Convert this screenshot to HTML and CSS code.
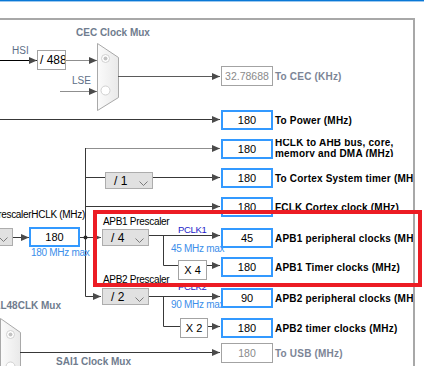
FILE: index.html
```html
<!DOCTYPE html>
<html lang="en">
<head>
  <meta charset="UTF-8">
  <meta name="viewport" content="width=device-width, initial-scale=1.0">
  <title>Clock Configuration</title>
  <link rel="stylesheet" href="styles.css">
</head>
<body>
  <div class="page">
    <div class="accent"></div>

    <div class="canvas">
      <svg class="wires" width="413" height="366" viewBox="0 0 413 366">
        <defs>
          <marker id="arr" markerWidth="8" markerHeight="7" refX="8" refY="3.5" orient="auto" markerUnits="userSpaceOnUse">
            <path class="head" d="M0,0 L8,3.5 L0,7 z"/>
          </marker>
          <linearGradient id="muxfill" x1="0" x2="1" y1="0" y2="0">
            <stop offset="0" stop-color="#fbfbfb"/>
            <stop offset="1" stop-color="#e9e9e9"/>
          </linearGradient>
        </defs>

        <!-- CEC mux -->
        <path class="wire dark" d="M0 60.5 H37" marker-end="url(#arr)"/>
        <path class="wire soft" d="M66 60.5 H97" marker-end="url(#arr)"/>
        <path class="wire soft" d="M60 91.5 H97" marker-end="url(#arr)"/>
        <polygon class="mux" points="97.5,43.5 118.5,57.5 118.5,97.5 97.5,110.5"/>
        <circle class="radio" cx="105.5" cy="58.5" r="4"/>
        <circle class="dot" cx="105.5" cy="58.5" r="2"/>
        <circle class="radio" cx="105.5" cy="90.5" r="4.5"/>
        <path class="wire mid" d="M118 76.5 H220" marker-end="url(#arr)"/>

        <!-- HCLK outputs -->
        <path class="wire" d="M0 119.5 H220" marker-end="url(#arr)"/>
        <path class="wire soft" d="M85.5 148.5 H220" marker-end="url(#arr)"/>
        <path class="wire" d="M85.5 148 V296.5 H101" marker-end="url(#arr)"/>
        <path class="wire" d="M85.5 177.5 H105"/>
        <path class="wire" d="M153 177.5 H220" marker-end="url(#arr)"/>
        <path class="wire" d="M85.5 206.5 H220" marker-end="url(#arr)"/>
        <path class="wire" d="M13 237.5 H29" marker-end="url(#arr)"/>
        <path class="wire" d="M79 237.5 H101" marker-end="url(#arr)"/>
        <circle class="joint" cx="85.5" cy="237.5" r="2"/>

        <!-- APB1 -->
        <path class="wire" d="M149 235.5 H220" marker-end="url(#arr)"/>
        <path class="wire" d="M163.5 235.5 V265.5 H178"/>
        <path class="wire" d="M207 265.5 H220" marker-end="url(#arr)"/>

        <!-- APB2 -->
        <path class="wire" d="M149 296.5 H220" marker-end="url(#arr)"/>
        <path class="wire" d="M163.5 296.5 V326.5 H180"/>
        <path class="wire" d="M208 326.5 H220" marker-end="url(#arr)"/>

        <!-- 48 MHz mux -->
        <polygon class="mux" points="0.5,318.5 20.5,332.5 20.5,390 0.5,400"/>
        <circle class="radio" cx="10.5" cy="334.5" r="4"/>
        <circle class="dot" cx="10.5" cy="334.5" r="2"/>
        <circle class="radio" cx="10.5" cy="366.5" r="4.5"/>
        <path class="wire" d="M20 352.5 H220" marker-end="url(#arr)"/>
      </svg>

      <!-- CEC clock mux -->
      <div class="txt title t-cec">CEC Clock Mux</div>
      <div class="txt sig t-hsi">HSI</div>
      <div class="txt sig t-lse">LSE</div>
      <div class="node div-hsi">/ 488</div>
      <div class="node val off r-cec">32.78688</div>
      <div class="node out off r-cec">To CEC (KHz)</div>

      <!-- HCLK -->
      <div class="node val r-pwr">180</div>
      <div class="node out r-pwr">To Power (MHz)</div>
      <div class="node val r-ahb">180</div>
      <div class="node out two r-ahb"><span>HCLK to AHB bus, core,<br>memory and DMA (MHz)</span></div>
      <div class="node sel s-sys">
        <span>/ 1</span>
        <svg class="chev" width="9" height="5" viewBox="0 0 9 5"><path d="M0.5 0.5 L4.5 4.5 L8.5 0.5"/></svg>
      </div>
      <div class="node val r-sys">180</div>
      <div class="node out r-sys">To Cortex System timer (MHz)</div>
      <div class="node val r-fclk">180</div>
      <div class="node out r-fclk">FCLK Cortex clock (MHz)</div>

      <div class="txt t-hclk">AHB PrescalerHCLK (MHz)</div>
      <div class="node sel s-ahb">
        <span>/ 1</span>
        <svg class="chev" width="9" height="5" viewBox="0 0 9 5"><path d="M0.5 0.5 L4.5 4.5 L8.5 0.5"/></svg>
      </div>
      <div class="node val v-hclk">180</div>
      <div class="txt hint t-hclkmax">180 MHz max</div>

      <!-- APB1 -->
      <div class="txt t-apb1">APB1 Prescaler</div>
      <div class="node sel s-apb1">
        <span>/ 4</span>
        <svg class="chev" width="9" height="5" viewBox="0 0 9 5"><path d="M0.5 0.5 L4.5 4.5 L8.5 0.5"/></svg>
      </div>
      <div class="txt pclk t-pclk1">PCLK1</div>
      <div class="txt hint t-max45">45 MHz max</div>
      <div class="node mul m-4">X 4</div>
      <div class="node val r-apb1p">45</div>
      <div class="node out r-apb1p">APB1 peripheral clocks (MHz)</div>
      <div class="node val r-apb1t">180</div>
      <div class="node out r-apb1t">APB1 Timer clocks (MHz)</div>

      <!-- APB2 -->
      <div class="txt t-apb2">APB2 Prescaler</div>
      <div class="node sel s-apb2">
        <span>/ 2</span>
        <svg class="chev" width="9" height="5" viewBox="0 0 9 5"><path d="M0.5 0.5 L4.5 4.5 L8.5 0.5"/></svg>
      </div>
      <div class="txt pclk t-pclk2">PCLK2</div>
      <div class="txt hint t-max90">90 MHz max</div>
      <div class="node mul m-2">X 2</div>
      <div class="node val r-apb2p">90</div>
      <div class="node out r-apb2p">APB2 peripheral clocks (MHz)</div>
      <div class="node val r-apb2t">180</div>
      <div class="node out r-apb2t">APB2 timer clocks (MHz)</div>

      <!-- USB -->
      <div class="txt title t-pll48">PLL48CLK Mux</div>
      <div class="txt title t-sai1">SAI1 Clock Mux</div>
      <div class="node val off r-usb">180</div>
      <div class="node out off r-usb">To USB (MHz)</div>
    </div>

    <div class="frame"></div>
    <div class="focus"></div>
  </div>
</body>
</html>
```

FILE: styles.css
```css
* {
  margin: 0;
  padding: 0;
  box-sizing: border-box;
}

body {
  font-family: "Liberation Sans", Arial, sans-serif;
  background: #fff;
  color: #000;
}

.page {
  position: relative;
  width: 424px;
  height: 366px;
  overflow: hidden;
  background: #fff;
}

.accent {
  height: 2px;
  background: #0a78d6;
  border-bottom: 1px solid #9cc8ef;
}

.frame {
  position: absolute;
  left: -2px;
  top: 18px;
  width: 417px;
  height: 360px;
  border-top: 2px solid #a8a8a8;
  border-right: 2px solid #a8a8a8;
}

/* red annotation around the APB1 block */
.focus {
  position: absolute;
  left: 93px;
  top: 210px;
  width: 329px;
  height: 77px;
  border: 4px solid #ec1c24;
}

.canvas {
  position: absolute;
  left: 0;
  top: 0;
  width: 413px;
  height: 366px;
  overflow: hidden;
}

/* wires */
.wires {
  position: absolute;
  left: 0;
  top: 0;
}

.wire {
  fill: none;
  stroke: #383838;
  stroke-width: 1;
}

.wire.dark {
  stroke: #000;
}

.wire.mid {
  stroke: #5a5a5a;
}

.wire.soft {
  stroke: #8f8f8f;
}

.head {
  fill: #4a4a4a;
}

.joint {
  fill: #2a2a2a;
}

.mux {
  fill: url(#muxfill);
  stroke: #a9a9a9;
  stroke-width: 1;
}

.radio {
  fill: #fff;
  stroke: #d0d0d0;
  stroke-width: 1;
}

.dot {
  fill: #c2c2c2;
}

/* nodes */
.node {
  position: absolute;
}

.val {
  left: 221px;
  width: 52px;
  height: 20px;
  border: 2px solid #3399ff;
  background: #fff;
  display: flex;
  align-items: center;
  justify-content: center;
  font-size: 11px;
}

.val.off {
  border: 1px solid #a3a3a3;
  color: #8a8a8a;
  font-size: 10.5px;
}

.out {
  left: 275px;
  height: 20px;
  display: flex;
  align-items: center;
  font-size: 10px;
  font-weight: bold;
  letter-spacing: 0.2px;
  white-space: nowrap;
}

.out.off {
  color: #7c8596;
}

.out.two {
  height: 18px;
  overflow: hidden;
  line-height: 11.5px;
}

.r-cec { top: 66px; }
.r-pwr { top: 110px; }
.r-ahb { top: 139px; }
.r-sys { top: 168px; }
.r-fclk { top: 197px; }
.r-apb1p { top: 228px; }
.r-apb1t { top: 257px; }
.r-apb2p { top: 288px; }
.r-apb2t { top: 318px; }
.r-usb { top: 343px; }

.v-hclk {
  left: 29px;
  top: 227px;
  width: 51px;
}

.div-hsi {
  left: 37px;
  top: 50px;
  width: 29px;
  height: 20px;
  border: 1px solid #a3a3a3;
  background: #fff;
  overflow: hidden;
  display: flex;
  align-items: center;
  padding-left: 2px;
  font-size: 12px;
  white-space: nowrap;
}

.sel {
  height: 17px;
  background: #e1e1e1;
  border: 1px solid #adadad;
  display: flex;
  align-items: center;
  justify-content: space-between;
  padding: 0 4px 0 8px;
  font-size: 12px;
  white-space: nowrap;
}

.chev {
  margin-top: 5px;
}

.chev path {
  fill: none;
  stroke: #7a7a7a;
  stroke-width: 1;
}

.s-sys { left: 105px; top: 172px; width: 48px; }
.s-ahb { left: -35px; top: 228px; width: 48px; height: 18px; }
.s-apb1 { left: 102px; top: 229px; width: 47px; }
.s-apb2 { left: 102px; top: 288px; width: 47px; }

.mul {
  height: 20px;
  border: 1px solid #a3a3a3;
  background: #fff;
  display: flex;
  align-items: center;
  justify-content: center;
  font-size: 11px;
}

.m-4 { left: 178px; top: 260px; width: 29px; }
.m-2 { left: 180px; top: 318px; width: 28px; }

/* free labels */
.txt {
  position: absolute;
  font-size: 10px;
  line-height: 12px;
  letter-spacing: -0.3px;
  white-space: nowrap;
}

.title {
  font-weight: bold;
  letter-spacing: 0;
  color: #6f7c8e;
}

.sig {
  color: #5d6e86;
  letter-spacing: 0;
}

.hint {
  color: #3b8eea;
}

.pclk {
  color: #1c1cc8;
  font-size: 9.5px;
}

.t-cec { left: 76px; top: 27px; }
.t-hsi { left: 12px; top: 45px; }
.t-lse { left: 72px; top: 75px; }
.t-hclk { right: 328px; top: 209px; }
.t-hclkmax { left: 31px; top: 247px; }
.t-apb1 { left: 103px; top: 216px; }
.t-pclk1 { left: 178px; top: 224px; }
.t-max45 { left: 171px; top: 243px; }
.t-apb2 { left: 103px; top: 274px; }
.t-pclk2 { left: 178px; top: 281px; }
.t-max90 { left: 171px; top: 299px; }
.t-pll48 { right: 352px; top: 300px; }
.t-sai1 { left: 56px; top: 356px; }
```
